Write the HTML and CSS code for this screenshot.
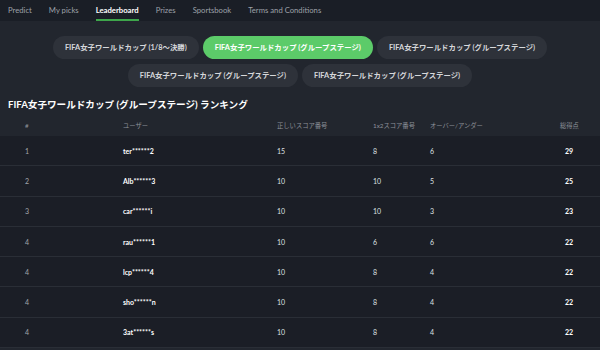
FILE: index.html
```html
<!DOCTYPE html>
<html lang="ja">
    <head>
        <meta charset="utf-8" />
        <title>Leaderboard</title>
        <link rel="stylesheet" href="styles.css">
    </head>
    <body>
        <div class="nav">
            <span class="nav-item">Predict</span>
            <span class="nav-item">My picks</span>
            <span class="nav-item active">Leaderboard</span>
            <span class="nav-item">Prizes</span>
            <span class="nav-item">Sportsbook</span>
            <span class="nav-item">Terms and Conditions</span>
        </div>
        <div class="content">
            <div class="pills">
                <div class="pill-row">
                    <span class="pill">FIFA女子ワールドカップ (1/8〜決勝)</span>
                    <span class="pill selected">FIFA女子ワールドカップ (グループステージ)</span>
                    <span class="pill">FIFA女子ワールドカップ (グループステージ)</span>
                </div>
                <div class="pill-row">
                    <span class="pill">FIFA女子ワールドカップ (グループステージ)</span>
                    <span class="pill">FIFA女子ワールドカップ (グループステージ)</span>
                </div>
            </div>
            <h2 class="title">FIFA女子ワールドカップ (グループステージ) ランキング</h2>
            <div class="table">
                <div class="row head">
                    <span>#</span>
                    <span>ユーザー</span>
                    <span>正しいスコア番号</span>
                    <span>1x2スコア番号</span>
                    <span>オーバー/アンダー</span>
                    <span>総得点</span>
                </div>
                <div class="row">
                    <span class="rank">1</span><span class="user">ter******2</span><span>15</span><span>8</span><span>6</span><span class="total">29</span>
                </div>
                <div class="row">
                    <span class="rank">2</span><span class="user">Alb******3</span><span>10</span><span>10</span><span>5</span><span class="total">25</span>
                </div>
                <div class="row">
                    <span class="rank">3</span><span class="user">car******i</span><span>10</span><span>10</span><span>3</span><span class="total">23</span>
                </div>
                <div class="row">
                    <span class="rank">4</span><span class="user">rau******1</span><span>10</span><span>6</span><span>6</span><span class="total">22</span>
                </div>
                <div class="row">
                    <span class="rank">4</span><span class="user">lcp******4</span><span>10</span><span>8</span><span>4</span><span class="total">22</span>
                </div>
                <div class="row">
                    <span class="rank">4</span><span class="user">sho******n</span><span>10</span><span>8</span><span>4</span><span class="total">22</span>
                </div>
                <div class="row">
                    <span class="rank">4</span><span class="user">3at******s</span><span>10</span><span>8</span><span>4</span><span class="total">22</span>
                </div>
            </div>
        </div>
    </body>
</html>
```
FILE: styles.css
```css
html, body {
    margin: 0;
    height: 100%;
    overflow: hidden;
}
body {
    background: #22262e;
    font-family: Lato, "Noto Sans CJK JP", sans-serif;
    color: #e4e5e7;
}
.nav {
    height: 21px;
    background: #1a1e26;
    display: flex;
    gap: 17px;
    padding-left: 8px;
    box-sizing: border-box;
}
.nav-item {
    font-size: 7.7px;
    line-height: 20px;
    color: #9da1a8;
    border-bottom: 2px solid transparent;
}
.nav-item.active {
    color: #ffffff;
    font-weight: 700;
    border-bottom-color: #3ea64b;
}
.content {
    padding-top: 15px;
}
.pills {
    display: flex;
    flex-direction: column;
    gap: 5px;
}
.pill-row {
    display: flex;
    justify-content: center;
    gap: 4px;
}
.pill {
    height: 23px;
    line-height: 23px;
    padding: 0 12px;
    border-radius: 12px;
    background: #2e323a;
    color: #d6d8db;
    font-size: 7.4px;
    font-weight: 700;
    white-space: nowrap;
}
.pill.selected {
    background: #5ccb69;
    color: #ffffff;
}
.title {
    margin: 12px 0 0 8px;
    font-size: 9.6px;
    font-weight: 700;
    color: #ffffff;
    line-height: 12px;
}
.table {
    margin-top: 3px;
}
.row {
    display: grid;
    grid-template-columns: 98px 154px 96px 57px 130px 1fr;
    padding-left: 25px;
    height: 30.3px;
    box-sizing: border-box;
    align-items: center;
    background: #1b1e26;
    border-bottom: 1px solid #2a2e36;
    font-size: 7px;
    color: #dfe1e4;
}
.row.head {
    height: 22px;
    background: #22262e;
    border-bottom: none;
    font-size: 6.3px;
    color: #8e929a;
}
.rank {
    color: #a3a6ac;
}
.user, .total {
    font-weight: 700;
    color: #ffffff;
}
.total {
    padding-left: 5px;
}
```
